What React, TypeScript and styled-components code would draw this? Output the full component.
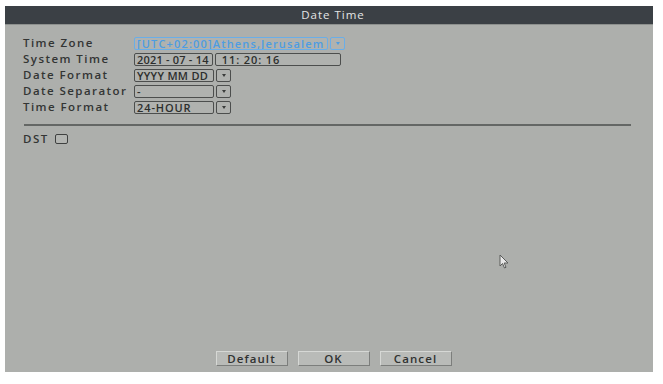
import React from "react";
import styled, { createGlobalStyle } from "styled-components";

const Global = createGlobalStyle`
  html, body { margin: 0; padding: 0; background: #ffffff; }
  body { width: 663px; height: 384px; overflow: hidden; font-family: "Open Sans", "DejaVu Sans", sans-serif; }
`;

const Screen = styled.div`
  width: 663px;
  height: 384px;
  padding: 6px 10px 12px 5px;
  box-sizing: border-box;
  display: flex;
`;

const Panel = styled.div`
  position: relative;
  flex: 1;
  display: flex;
  flex-direction: column;
  background: #adafac;
`;

const TitleBar = styled.div`
  height: 18px;
  background: #3b4045;
  color: #e4e6e6;
  font-size: 11.5px;
  line-height: 18px;
  text-align: center;
  letter-spacing: 1px;
  padding-left: 8px;
  border-bottom: 1px solid #8d908e;
`;

const Body = styled.div`
  flex: 1;
  display: flex;
  flex-direction: column;
  padding: 10px 22px 0 18px;
`;

const Form = styled.div`
  display: grid;
  grid-template-columns: 111px auto;
  grid-auto-rows: 16px;
  align-items: center;
  justify-items: start;
`;

const Label = styled.div`
  font-size: 11.5px;
  font-weight: 600;
  color: #333534;
  letter-spacing: 1.45px;
  white-space: nowrap;
  line-height: 14px;
`;

const FieldRow = styled.div`
  display: flex;
  gap: 2px;
  height: 13px;
`;

const Box = styled.div<{ $w: number; $blue?: boolean; $ls?: number }>`
  width: ${(p) => p.$w}px;
  height: 13px;
  box-sizing: border-box;
  border: 1px solid ${(p) => (p.$blue ? "#6aaee8" : "#4c4e4d")};
  border-radius: 2px;
  background: #b0b2af;
  color: ${(p) => (p.$blue ? "#4d9de2" : "#2c2e2d")};
  font-size: 11px;
  font-weight: 600;
  line-height: 11px;
  padding-left: 2px;
  white-space: nowrap;
  overflow: hidden;
  letter-spacing: ${(p) => p.$ls ?? 0.8}px;
`;

const Arrow = styled.div<{ $blue?: boolean }>`
  width: 15px;
  height: 13px;
  box-sizing: border-box;
  border: 1px solid ${(p) => (p.$blue ? "#6aaee8" : "#4c4e4d")};
  border-radius: 2px;
  background: #b0b2af;
  display: flex;
  align-items: center;
  justify-content: center;
  &::after {
    content: "";
    border-left: 2.5px solid transparent;
    border-right: 2.5px solid transparent;
    border-top: 3px solid ${(p) => (p.$blue ? "#4d9de2" : "#3a3c3b")};
  }
`;

const Divider = styled.div`
  height: 2px;
  background: #646765;
  margin: 9px 0 0 1px;
`;

const DstRow = styled.div`
  display: flex;
  align-items: center;
  gap: 6px;
  margin-top: 7px;
  height: 12px;
`;

const Check = styled.div`
  width: 13px;
  height: 10px;
  box-sizing: border-box;
  border: 1px solid #3f4140;
  border-radius: 2px;
  background: #b3b5b2;
`;

const Footer = styled.div`
  margin-top: auto;
  display: flex;
  justify-content: center;
  gap: 10px;
  padding: 0 0 6px 9px;
`;

const Button = styled.div`
  width: 72px;
  height: 15px;
  box-sizing: border-box;
  background: #b9bbb8;
  border-top: 1px solid #d6d8d5;
  border-left: 1px solid #d6d8d5;
  border-right: 1px solid #7c7e7c;
  border-bottom: 1px solid #7c7e7c;
  font-size: 11.5px;
  font-weight: 600;
  color: #303231;
  text-align: center;
  line-height: 13px;
  letter-spacing: 1.1px;
`;

const Cursor = styled.svg`
  position: absolute;
  left: 494px;
  top: 248px;
`;

const rows = [
  { label: "Date Format", value: "YYYY MM DD", ls: 0.3 },
  { label: "Date Separator", value: "-", ls: 0.8 },
  { label: "Time Format", value: "24-HOUR", ls: 0.9 },
];

export default function App() {
  return (
    <>
      <Global />
      <Screen>
        <Panel>
          <TitleBar>Date Time</TitleBar>
          <Body>
            <Form>
              <Label>Time Zone</Label>
              <FieldRow>
                <Box $w={194} $blue $ls={1.15}>[UTC+02:00]Athens,Jerusalem</Box>
                <Arrow $blue />
              </FieldRow>
              <Label>System Time</Label>
              <FieldRow>
                <Box $w={79} $ls={0.2}>2021 - 07 - 14</Box>
                <Box $w={126} $ls={0.9}>&nbsp;11: 20: 16</Box>
              </FieldRow>
              {rows.map((r) => (
                <React.Fragment key={r.label}>
                  <Label>{r.label}</Label>
                  <FieldRow>
                    <Box $w={80} $ls={r.ls}>{r.value}</Box>
                    <Arrow />
                  </FieldRow>
                </React.Fragment>
              ))}
            </Form>
            <Divider />
            <DstRow>
              <Label>DST</Label>
              <Check />
            </DstRow>
          </Body>
          <Footer>
            <Button>Default</Button>
            <Button>OK</Button>
            <Button>Cancel</Button>
          </Footer>
          <Cursor width="12" height="16" viewBox="0 0 12 16">
            <path d="M1 1 L1 12 L3.5 9.5 L5.5 14 L7 13.3 L5.2 9 L9 9 Z" fill="#e8e8e8" stroke="#5a5c5b" strokeWidth="1" />
          </Cursor>
        </Panel>
      </Screen>
    </>
  );
}
